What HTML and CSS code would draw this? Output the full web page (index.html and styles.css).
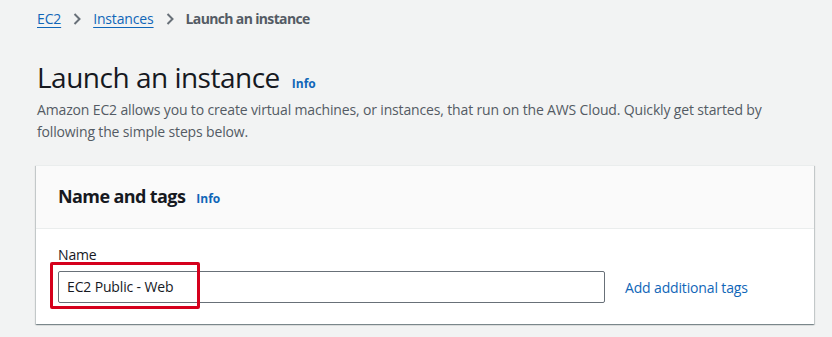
FILE: index.html
```html
<!DOCTYPE html>
<html lang="en">
<head>
<meta charset="utf-8">
<title>Launch an instance</title>
<link rel="stylesheet" href="styles.css">
</head>
<body>
<div class="page">
  <nav class="breadcrumbs">
    <a class="crumb-link" href="#">EC2</a>
    <svg class="chevron" width="8" height="12" viewBox="0 0 8 12"><polyline points="1.5,1 6.5,6 1.5,11" fill="none" stroke="#687078" stroke-width="2"/></svg>
    <a class="crumb-link" href="#">Instances</a>
    <svg class="chevron" width="8" height="12" viewBox="0 0 8 12"><polyline points="1.5,1 6.5,6 1.5,11" fill="none" stroke="#687078" stroke-width="2"/></svg>
    <span class="crumb-current">Launch an instance</span>
  </nav>

  <div class="title-row">
    <h1 class="title">Launch an instance</h1>
    <a class="info" href="#">Info</a>
  </div>
  <p class="description">Amazon EC2 allows you to create virtual machines, or instances, that run on the AWS Cloud. Quickly get started by following the simple steps below.</p>

  <section class="card">
    <header class="card-header">
      <h2 class="card-title">Name and tags</h2>
      <a class="info" href="#">Info</a>
    </header>
    <div class="card-body">
      <label class="field-label">Name</label>
      <div class="field-row">
        <div class="input-wrap">
          <div class="input">EC2 Public - Web</div>
          <div class="highlight"></div>
        </div>
        <a class="add-tags" href="#">Add additional tags</a>
      </div>
    </div>
  </section>
</div>
</body>
</html>
```

FILE: styles.css
```css
* { box-sizing: border-box; }
html, body { margin: 0; padding: 0; }
body {
  background: #f2f3f3;
  font-family: "Open Sans", "Noto Sans", sans-serif;
  font-size: 14px;
  letter-spacing: -0.15px;
  color: #16191f;
  width: 832px;
  height: 337px;
  overflow: hidden;
}
.page {
  padding: 9px 18px 0 37px;
}
.breadcrumbs {
  display: flex;
  align-items: center;
  height: 20px;
  line-height: 20px;
  font-size: 14px;
}
.crumb-link {
  color: #1066b8;
  text-decoration: underline;
  text-underline-offset: 3px;
}
.chevron { margin: 0 12px; }
.crumb-current {
  color: #545b64;
  font-weight: 700;
  letter-spacing: -0.65px;
}
.title-row {
  display: flex;
  align-items: baseline;
  margin-top: 30px;
  height: 36px;
}
.title {
  margin: 0;
  font-size: 28px;
  line-height: 36px;
  font-weight: 400;
  letter-spacing: -0.5px;
  color: #16191f;
}
.info {
  color: #1066b8;
  font-size: 12px;
  font-weight: 700;
  letter-spacing: 0;
  text-decoration: none;
  margin-left: 12px;
}
.description {
  margin: 4px 0 0;
  line-height: 22px;
  color: #545b64;
  max-width: 760px;
}
.card {
  margin-top: 22px;
  margin-left: -1px;
  background: #fff;
  border-top: 1px solid #eaeded;
  box-shadow: 0 1px 1px 0 rgba(0,28,36,.3), 1px 1px 1px 0 rgba(0,28,36,.15), -1px 1px 1px 0 rgba(0,28,36,.15);
}
.card-header {
  display: flex;
  align-items: baseline;
  padding: 18px 22px 0;
  height: 63px;
  background: #fafafa;
  border-bottom: 1px solid #eaeded;
}
.card-title {
  margin: 0;
  font-size: 18px;
  line-height: 24px;
  font-weight: 700;
  letter-spacing: -0.6px;
  color: #16191f;
}
.card-header .info { margin-left: 11px; }
.card-body {
  padding: 15px 22px 21px;
}
.field-label {
  display: block;
  line-height: 22px;
  color: #16191f;
}
.field-row {
  display: flex;
  align-items: center;
  margin-top: 5px;
}
.input-wrap {
  position: relative;
  width: 547px;
}
.input {
  height: 32px;
  border: 1px solid #687078;
  border-radius: 2px;
  padding: 0 8px;
  line-height: 30px;
  color: #16191f;
  background: #fff;
}
.highlight {
  position: absolute;
  left: -8px;
  top: -9px;
  width: 150px;
  height: 47px;
  border: 3px solid #d5001c;
  border-radius: 2px;
}
.add-tags {
  margin-left: 20px;
  color: #1066b8;
  text-decoration: none;
}
```
